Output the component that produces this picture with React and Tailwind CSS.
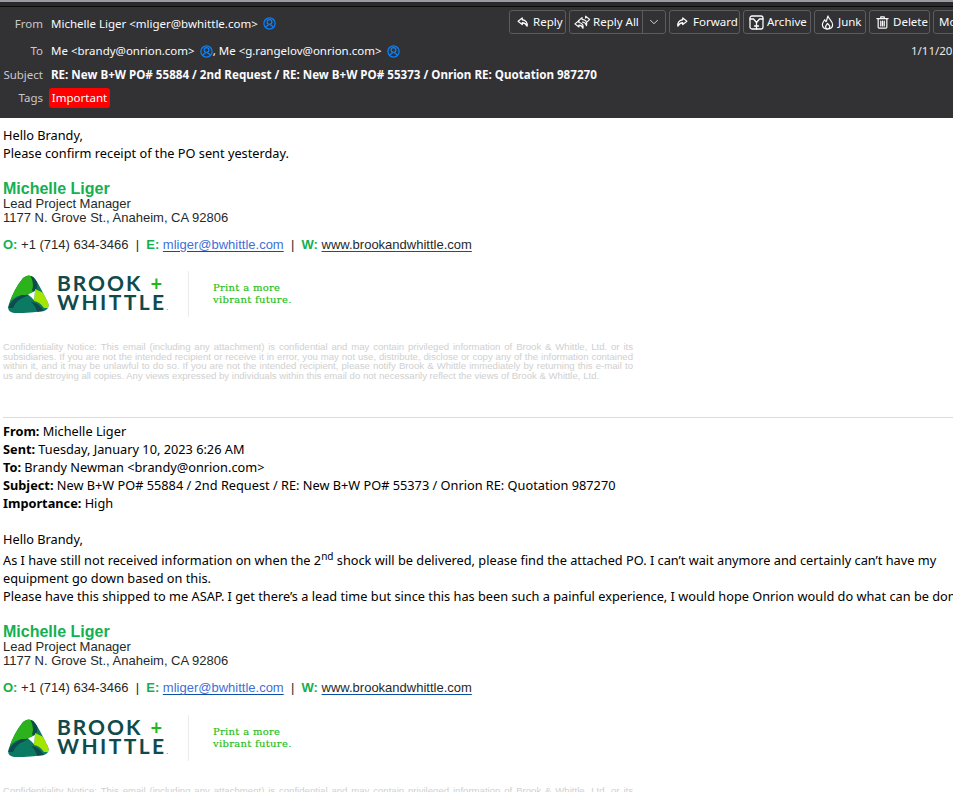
import React from "react";
import { ChevronDown } from "lucide-react";

const ic = { fill: "none", stroke: "currentColor", strokeWidth: 1.3, strokeLinejoin: "round", strokeLinecap: "round" };

function ReplyIcon({ flip = false, size = 12 }) {
  return (
    <svg width={size} height={size} viewBox="0 0 16 16" className={"shrink-0 " + (flip ? "-scale-x-100" : "")} {...ic} strokeWidth={1.7}>
      <path d="M7 2.5 L1.5 7 L7 11.5 V9 C10 9 12 10.5 13.5 13.5 C14.5 9 11.5 5.5 7 5 Z" />
    </svg>
  );
}

function ReplyAllIcon() {
  return (
    <svg width="17" height="15" viewBox="0 0 19 16" className="shrink-0" {...ic}>
      <path d="M5.5 6 L1 9.5 L5.5 13 V11 C7.5 11 9 12 10 14.5 C11 11 9 8.5 5.5 8 Z" />
      <path d="M9 2.5 L5 6 M9 2.5 V4.5 C13 5 15 7 14 11.5 C13.5 9.5 12 8 9.5 7.5" />
      <path d="M13 1 L17.5 4.5 L15 7 M13 1 V3" />
    </svg>
  );
}

function ArchiveIcon() {
  return (
    <svg width="15" height="15" viewBox="0 0 15 15" className="shrink-0" {...ic}>
      <rect x="1" y="1" width="13" height="13" rx="2" />
      <path d="M1 4 H4.5 L7.5 7.5 L10.5 4 H14 M7.5 7.5 V14" />
      <path d="M5.5 11 H9.5" />
    </svg>
  );
}

function JunkIcon() {
  return (
    <svg width="13" height="15" viewBox="0 0 14 16" className="shrink-0" {...ic}>
      <path d="M7.5 1 C8 4 12.5 6 12.5 10.5 C12.5 13.5 10 15 7 15 C4 15 1.5 13.5 1.5 10.5 C1.5 8 3 6.5 4 5 C4.5 6 5 7 5.5 7 C6.5 5.5 6.5 3 7.5 1 Z" />
      <path d="M7 9 C6 10.5 5 11 5 12.5 C5 14 6 15 7 15 C8 15 9.5 14 9.5 12.5 C9.5 11 8 10.5 7 9 Z" />
    </svg>
  );
}

function TrashIcon() {
  return (
    <svg width="13" height="15" viewBox="0 0 15 15" className="shrink-0" {...ic} strokeWidth={1.4}>
      <path d="M1 3 H14 M5.5 3 V1 H9.5 V3" />
      <path d="M2.5 3 V13 Q2.5 14 3.5 14 H11.5 Q12.5 14 12.5 13 V3" />
      <path d="M5.5 6 V11.5 M7.5 6 V11.5 M9.5 6 V11.5" />
    </svg>
  );
}

function Btn({ icon, label, className = "" }) {
  return (
    <div className={"h-6 shrink-0 flex items-center overflow-hidden border border-[#5c5c5f] rounded-[3px] text-[#fbfbfe] whitespace-nowrap " + className}>
      {icon}
      <span>{label}</span>
    </div>
  );
}

function Contact() {
  return (
    <svg width="13" height="13" viewBox="0 0 13 13" className="shrink-0 text-[#0a84ff]" fill="none" stroke="currentColor" strokeWidth="1.2">
      <circle cx="6.5" cy="6.5" r="5.6" />
      <circle cx="6.5" cy="5" r="2.4" />
      <path d="M2.5 10.5 C3.5 8.5 5 8.5 5.5 8 M10.5 10.5 C9.5 8.5 8 8.5 7.5 8" />
    </svg>
  );
}

function Logo({ id, className = "" }) {
  return (
    <div className={"flex items-center h-[46px] " + className}>
      <svg width="41" height="38" viewBox="0 0 41 38" className="ml-[5px] shrink-0">
        <defs>
          <clipPath id={id}>
            <path d="M15 3 Q20 -1.5 25 2 Q29 5 38 24 Q44 33 36 36 Q20 38.5 6 38 Q-2 37 1 29 Q6 14 15 3 Z" />
          </clipPath>
        </defs>
        <g clipPath={`url(#${id})`}>
          <rect x="-2" y="-2" width="46" height="42" fill="#0c7a62" />
          <path d="M26 -2 L-4 -2 L-4 27 L2 26 Q10 19 17 20 L22 19 L27 13 Z" fill="#2cb21a" />
          <path d="M25 -2 Q32 6 28 15 L26 17 L24 15 Q27 8 21 -2 Z" fill="#0f4a4c" />
          <path d="M27 14 L44 22 L44 33 L36 33 Q32 27 26 26 Z" fill="#a5e600" />
          <path d="M0 33 Q3 24 14 20 L20 20 L17 22 Q8 25 5 33 Z" fill="#0f4a4c" />
          <path d="M23 27 Q30 27 36 36 L44 36 L44 40 L30 40 Q28 31 23 27 Z" fill="#0f4a4c" />
          <path d="M20 19.5 L27 16 L26 25 L23 22 Z" fill="#ffffff" />
        </g>
      </svg>
      <div className="ml-[8px] w-[124px] font-['Lato',sans-serif] font-bold text-[#0f4a4c] text-[21px] leading-[20px] tracking-[2px] pt-[3px] whitespace-nowrap">
        <div className="flex items-center h-[19px]">BROOK<span className="ml-[8px] text-[#1fb81a] text-[20px] tracking-normal">+</span></div>
        <div className="tracking-[2.4px]">WHITTLE<span className="text-[6px] tracking-normal">.</span></div>
      </div>
      <div className="w-px h-[46px] bg-[#ececec] ml-[7px]" />
      <div className="ml-[24px] font-['DejaVu_Serif',serif] text-[#1fbf1a] text-[10px] leading-[12.5px] font-medium tracking-[0.3px] whitespace-nowrap [-webkit-text-stroke:0.2px_#1fbf1a]">
        <div>Print a more</div>
        <div>vibrant future.</div>
      </div>
    </div>
  );
}

function Signature() {
  return (
    <div className="font-['Liberation_Sans',sans-serif]">
      <div className="text-[16px] leading-[17px] font-bold text-[#14b050]">Michelle Liger</div>
      <div className="text-[13px] leading-[14px] text-[#1f2a2a]">Lead Project Manager</div>
      <div className="text-[13px] leading-[14px] text-[#1f2a2a]">1177 N. Grove St., Anaheim, CA 92806</div>
      <div className="text-[13px] leading-[14px] mt-[13px] text-[#1f2a2a] whitespace-pre">
        <b className="text-[#14b050]">O:</b> +1 (714) 634-3466{"  |  "}<b className="text-[#14b050]">E:</b> <span className="text-[#3f6fd8] underline underline-offset-2 decoration-[#0b4fa8]">mliger@bwhittle.com</span>{"  |  "}<b className="text-[#14b050]">W:</b> <span className="underline underline-offset-2 decoration-[#0b4fa8]">www.brookandwhittle.com</span>
      </div>
    </div>
  );
}

function Notice() {
  return (
    <p className="w-[630px] font-['Liberation_Sans',sans-serif] text-[9.6px] leading-[9.6px] text-[#d0d0d0] text-justify">
      Confidentiality Notice: This email (including any attachment) is confidential and may contain privileged information of Brook &amp; Whittle, Ltd. or its subsidiaries. If you are not the intended recipient or receive it in error, you may not use, distribute, disclose or copy any of the information contained within it, and it may be unlawful to do so. If you are not the intended recipient, please notify Brook &amp; Whittle immediately by returning this e-mail to us and destroying all copies. Any views expressed by individuals within this email do not necessarily reflect the views of Brook &amp; Whittle, Ltd.
    </p>
  );
}

export default function App() {
  return (
    <div className="w-[953px] h-[792px] overflow-hidden bg-white font-['Noto_Sans',sans-serif]">
      <div className="h-[7px] bg-[#2a2a2e] border-t-[2px] border-b border-t-[#9a9aa2] border-b-[#0c0c0d]" />
      <div className="h-[111px] bg-[#323234] text-[11.5px] text-[#fbfbfe] relative">
        <div className="flex items-center h-[33px]">
          <div className="w-[43px] text-right text-[#c8c8cc]">From</div>
          <div className="ml-[8px] flex items-center gap-[5px] whitespace-nowrap">Michelle Liger &lt;mliger@bwhittle.com&gt; <Contact /></div>
        </div>
        <div className="flex items-center h-[22px]">
          <div className="w-[43px] text-right text-[#c8c8cc]">To</div>
          <div className="ml-[8px] flex items-center whitespace-nowrap">Me &lt;brandy@onrion.com&gt;<span className="ml-[5px]"><Contact /></span>, Me &lt;g.rangelov@onrion.com&gt;<span className="ml-[5px]"><Contact /></span></div>
        </div>
        <div className="flex items-center h-[26px]">
          <div className="w-[43px] text-right text-[#c8c8cc]">Subject</div>
          <div className="ml-[8px] font-bold text-[11.6px] whitespace-nowrap">RE: New B+W PO# 55884 / 2nd Request / RE: New B+W PO# 55373 / Onrion RE: Quotation 987270</div>
        </div>
        <div className="flex items-center h-[19px]">
          <div className="w-[43px] text-right text-[#c8c8cc]">Tags</div>
          <div className="ml-[6px] h-[20px] w-[61px] rounded-[3px] bg-[#ff0000] text-white flex items-center justify-center">Important</div>
        </div>
        <div className="absolute left-[509px] top-[3px] flex gap-[3px]">
          <Btn className="w-[57px] pl-[7px] gap-[4px]" icon={<ReplyIcon />} label="Reply" />
          <div className="h-6 w-[97px] shrink-0 flex items-center border border-[#5c5c5f] rounded-[3px] whitespace-nowrap">
            <div className="w-[73px] h-full flex items-center pl-[4px] gap-[2px] border-r border-[#5c5c5f]"><ReplyAllIcon /><span>Reply All</span></div>
            <div className="flex-1 flex justify-center"><ChevronDown size={14} strokeWidth={1.4} /></div>
          </div>
          <Btn className="w-[71px] pl-[6px] gap-[5px]" icon={<ReplyIcon flip />} label="Forward" />
          <Btn className="w-[68px] pl-[5px] gap-[3px]" icon={<ArchiveIcon />} label="Archive" />
          <Btn className="w-[52px] pl-[6px] gap-[4px]" icon={<JunkIcon />} label="Junk" />
          <Btn className="w-[61px] pl-[6px] gap-[4px]" icon={<TrashIcon />} label="Delete" />
          <Btn className="w-[40px] pl-[5px]" label="More" />
        </div>
        <div className="absolute left-[911px] top-[35px] whitespace-nowrap text-[#e8e8ea]">1/11/2023</div>
      </div>

      <div className="pl-[3px] pt-[8px]">
        <div className="text-[12.75px] leading-[18px] text-black">
          <div>Hello Brandy,</div>
          <div>Please confirm receipt of the PO sent yesterday.</div>
        </div>
        <div className="mt-[18px]"><Signature /></div>
        <Logo id="logo-a" className="mt-[19px]" />
        <div className="mt-[25px]"><Notice /></div>
        <div className="mt-[37px] h-px bg-[#dcdcdc]" />
        <div className="mt-[4px] text-[12.75px] leading-[18px] text-black whitespace-nowrap">
          <div><b>From:</b> Michelle Liger</div>
          <div><b>Sent:</b> Tuesday, January 10, 2023 6:26 AM</div>
          <div><b>To:</b> Brandy Newman &lt;brandy@onrion.com&gt;</div>
          <div><b>Subject:</b> New B+W PO# 55884 / 2nd Request / RE: New B+W PO# 55373 / Onrion RE: Quotation 987270</div>
          <div><b>Importance:</b> High</div>
          <div className="mt-[18px]">Hello Brandy,</div>
          <div className="mt-[3px]">As I have still not received information on when the 2<sup className="text-[10px] leading-none">nd</sup> shock will be delivered, please find the attached PO. I can’t wait anymore and certainly can’t have my</div>
          <div>equipment go down based on this.</div>
          <div>Please have this shipped to me ASAP. I get there’s a lead time but since this has been such a painful experience, I would hope Onrion would do what can be done</div>
        </div>
        <div className="mt-[18px]"><Signature /></div>
        <Logo id="logo-b" className="mt-[20px]" />
        <div className="mt-[25px]"><Notice /></div>
      </div>
    </div>
  );
}
